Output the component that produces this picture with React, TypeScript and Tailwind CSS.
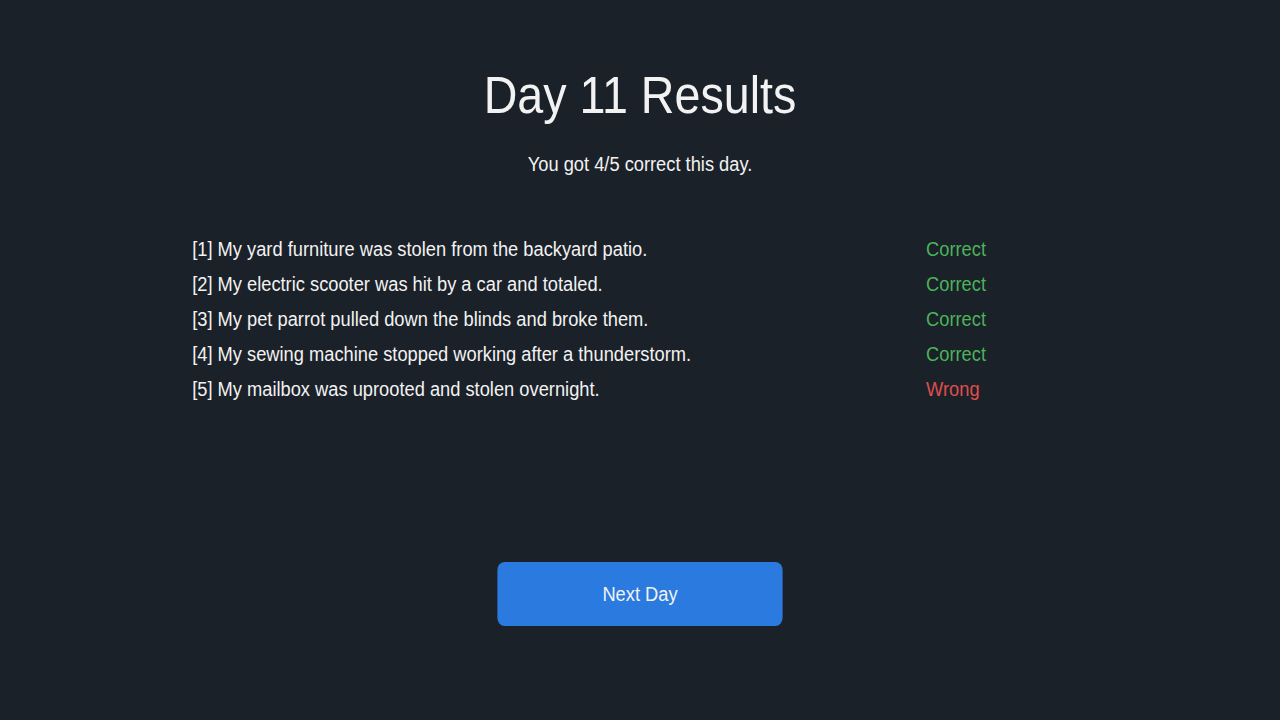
import React from 'react';

type Result = { id: number; text: string; correct: boolean };

const RESULTS: Result[] = [
  { id: 1, text: 'My yard furniture was stolen from the backyard patio.', correct: true },
  { id: 2, text: 'My electric scooter was hit by a car and totaled.', correct: true },
  { id: 3, text: 'My pet parrot pulled down the blinds and broke them.', correct: true },
  { id: 4, text: 'My sewing machine stopped working after a thunderstorm.', correct: true },
  { id: 5, text: 'My mailbox was uprooted and stolen overnight.', correct: false },
];

const App: React.FC = () => {
  const score = RESULTS.filter(r => r.correct).length;

  return (
    <div className="min-h-screen w-full bg-[#1b2129] overflow-hidden text-[#f2f2f2] font-['Liberation_Sans',Arial,sans-serif]">
      <div className="flex flex-col items-center pt-[70px] scale-x-[0.914] origin-center">
        <h1 className="text-[51px] leading-[51px] font-normal">Day 11 Results</h1>
        <p className="mt-[29px] text-[20px] leading-[28px]">
          You got {score}/{RESULTS.length} correct this day.
        </p>

        <div className="mt-[53px] w-[980px] flex flex-col">
          {RESULTS.map(r => (
            <div key={r.id} className="flex items-center h-[35px] text-[20px]">
              <span className="flex-1">[{r.id}] {r.text}</span>
              <span className={`w-[177px] ${r.correct ? 'text-[#4cb35a]' : 'text-[#e04d4d]'}`}>
                {r.correct ? 'Correct' : 'Wrong'}
              </span>
            </div>
          ))}
        </div>

        <button className="mt-[156px] w-[312px] h-[64px] rounded-lg bg-[#2b7ae0] text-[20px] text-[#f2f2f2]">
          Next Day
        </button>
      </div>
    </div>
  );
};

export default App;
